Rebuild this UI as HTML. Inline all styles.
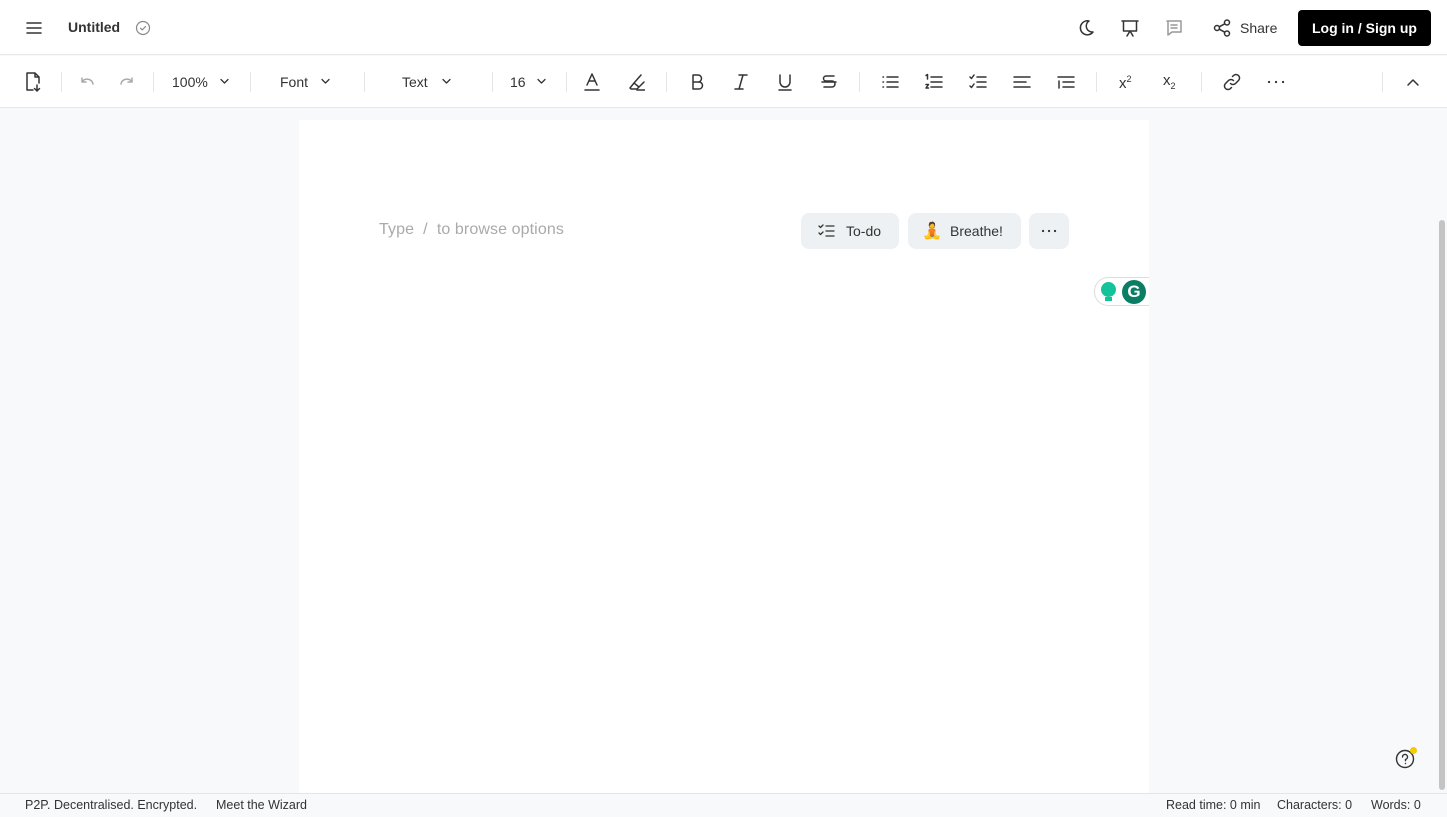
<!DOCTYPE html>
<html><head><meta charset="utf-8"><style>
*{box-sizing:border-box;margin:0;padding:0}
body{width:1447px;height:817px;overflow:hidden;background:#f8f9fb;font-family:"Liberation Sans",Arial,sans-serif;color:#222;position:relative}
.a{position:absolute}
svg{position:absolute;fill:none;stroke:#333;stroke-width:1.5;stroke-linecap:round;stroke-linejoin:round}
.sep{position:absolute;top:72px;width:1px;height:20px;background:#e3e5e8}
.t{position:absolute;font-size:14px;color:#333;top:74px}
.btn{position:absolute;top:213px;height:36px;background:#eef1f3;border-radius:8px;font-size:14px;color:#333;line-height:36px}
.f{position:absolute;top:798px;font-size:12.5px;color:#333}
</style></head><body>
<div class="a" style="left:0;top:0;width:1447px;height:55px;background:#fff;border-bottom:1px solid #e6e8eb"></div>
<div class="a" style="left:0;top:56px;width:1447px;height:52px;background:#fff;border-bottom:1px solid #e6e8eb"></div>
<svg style="left:25px;top:20px" width="18" height="16"><path d="M2 3h14M2 8h14M2 13h14"/></svg>
<div class="a" style="left:68px;top:19px;font-size:14px;font-weight:bold;color:#333">Untitled</div>
<svg style="left:135px;top:20px;stroke:#888;stroke-width:1.2" width="16" height="16"><circle cx="8" cy="8" r="6.5"/><path d="M5.5 8.2l1.8 1.7 3.2-3.4"/></svg>
<svg style="left:1076px;top:18px" width="20" height="20"><path d="M13 3a7 7 0 1 0 4 11 6 6 0 0 1-4-11z"/></svg>
<svg style="left:1120px;top:18px" width="20" height="20"><path d="M2 3h16M3.5 3v10h13V3M7 18l3-5 3 5"/></svg>
<svg style="left:1164px;top:18px;stroke:#999" width="20" height="20"><path d="M3 3h14v11H8l-4 3V3zM7 7h6M7 10h6"/></svg>
<svg style="left:1212px;top:18px" width="20" height="20"><circle cx="5" cy="10" r="2.5"/><circle cx="15" cy="4.5" r="2.5"/><circle cx="15" cy="15.5" r="2.5"/><path d="M7.2 8.8l5.6-3M7.2 11.2l5.6 3"/></svg>
<div class="a" style="left:1240px;top:20px;font-size:14px;color:#333">Share</div>
<div class="a" style="left:1298px;top:10px;width:133px;height:36px;background:#000;border-radius:4px;color:#fff;font-size:14px;font-weight:bold;text-align:center;line-height:36px">Log in / Sign up</div>
<svg style="left:23px;top:71px" width="20" height="22"><path d="M12 2H4v17h6M12 2l4 4v6M12 2v4h4M14 14v6M11.5 17.5l2.5 2.5 2.5-2.5"/></svg>
<div class="sep" style="left:61px"></div>
<svg style="left:78px;top:74px;stroke:#aaa" width="18" height="16"><path d="M4 4v4h4M4 8a6 6 0 0 1 11 2"/></svg>
<svg style="left:118px;top:74px;stroke:#aaa" width="18" height="16"><path d="M14 4v4h-4M14 8a6 6 0 0 0-11 2"/></svg>
<div class="sep" style="left:153px"></div>
<div class="t" style="left:172px">100%</div>
<svg style="left:220px;top:78px;stroke-width:1.3" width="9" height="7"><path d="M1 1.5l3.5 3.5 3.5-3.5"/></svg>
<div class="sep" style="left:250px"></div>
<div class="t" style="left:280px">Font</div>
<svg style="left:321px;top:78px;stroke-width:1.3" width="9" height="7"><path d="M1 1.5l3.5 3.5 3.5-3.5"/></svg>
<div class="sep" style="left:364px"></div>
<div class="t" style="left:402px">Text</div>
<svg style="left:442px;top:78px;stroke-width:1.3" width="9" height="7"><path d="M1 1.5l3.5 3.5 3.5-3.5"/></svg>
<div class="sep" style="left:492px"></div>
<div class="t" style="left:510px">16</div>
<svg style="left:537px;top:78px;stroke-width:1.3" width="9" height="7"><path d="M1 1.5l3.5 3.5 3.5-3.5"/></svg>
<div class="sep" style="left:566px"></div>
<svg style="left:583px;top:72px" width="18" height="20"><path d="M4 13L9 2l5 11M6 9h6M2 18h14"/></svg>
<svg style="left:627px;top:72px" width="18" height="20"><path d="M3 16l4-5 5 4-2 2H4zM7 11l7-8M12 15l5-5M10 18h8"/></svg>
<div class="sep" style="left:666px"></div>
<svg style="left:688px;top:72px" width="18" height="20"><path d="M5 3h5a3.5 3.5 0 0 1 0 7H5zM5 10h6a3.5 3.5 0 0 1 0 7H5z"/></svg>
<svg style="left:732px;top:72px" width="18" height="20"><path d="M7 3h8M3 17h8M11 3L7 17"/></svg>
<svg style="left:776px;top:72px" width="18" height="20"><path d="M4 3v7a5 5 0 0 0 10 0V3M3 18h12"/></svg>
<svg style="left:820px;top:72px" width="18" height="20"><path d="M14 4H6a2.5 2.5 0 0 0 0 5h6a3 3 0 0 1 0 6H4M2 10h14"/></svg>
<div class="sep" style="left:859px"></div>
<svg style="left:880px;top:72px" width="20" height="20"><path d="M3 5h.5M3 10h.5M3 15h.5M7 5h11M7 10h11M7 15h11"/></svg>
<svg style="left:924px;top:72px" width="20" height="20"><path d="M2 3.5l1.5-1V7M2 12.5h2.5L2 16h2.5M7 5h11M7 10h11M7 15h11"/></svg>
<svg style="left:968px;top:72px" width="20" height="20"><path d="M2 5l1.5 1.5L6 3M2 14l1.5 1.5L6 12M9 5h9M9 10h9M9 15h9"/></svg>
<svg style="left:1012px;top:72px" width="20" height="20"><path d="M2 5h16M2 10h12M2 15h16"/></svg>
<svg style="left:1056px;top:72px" width="20" height="20"><path d="M2 5h16M7 10h11M7 15h11M3 9v7"/></svg>
<div class="sep" style="left:1096px"></div>
<div class="a" style="left:1119px;top:74px;font-size:15px;color:#333">x<sup style="font-size:9px">2</sup></div>
<div class="a" style="left:1163px;top:72px;font-size:15px;color:#333">x<sub style="font-size:9px">2</sub></div>
<div class="sep" style="left:1201px"></div>
<svg style="left:1222px;top:72px" width="20" height="20"><path d="M8.5 11.5a3.5 3.5 0 0 0 5 0l3-3a3.5 3.5 0 0 0-5-5l-1 1M11.5 8.5a3.5 3.5 0 0 0-5 0l-3 3a3.5 3.5 0 0 0 5 5l1-1"/></svg>
<svg style="left:1266px;top:72px;stroke-width:2.2" width="20" height="20"><path d="M3 10h.1M10 10h.1M17 10h.1"/></svg>
<div class="sep" style="left:1382px"></div>
<svg style="left:1405px;top:76px" width="16" height="12"><path d="M3 9l5-5 5 5"/></svg>
<div class="a" style="left:299px;top:120px;width:850px;height:673px;background:#fff"></div>
<div class="a" style="left:379px;top:221px;font-size:16px;color:#aaa;letter-spacing:0.1px">Type &nbsp;/ &nbsp;to browse options</div>
<div class="btn" style="left:801px;width:98px;padding-left:45px">To-do</div>
<svg style="left:818px;top:223px;stroke-width:1.3" width="18" height="16"><path d="M1 3l1.5 1.5L5 2M1 10l1.5 1.5L5 9M8 3h8M8 8h8M8 13h8"/></svg>
<div class="btn" style="left:908px;width:113px;padding-left:42px">Breathe!</div>
<div class="a" style="left:922px;top:221px;font-size:16px;font-family:'Noto Color Emoji','DejaVu Sans',sans-serif">🧘</div>
<div class="btn" style="left:1029px;width:40px"></div>
<svg style="left:1039px;top:221px;stroke-width:2.2" width="20" height="20"><path d="M4 10h.1M10 10h.1M16 10h.1"/></svg>
<div class="a" style="left:1094px;top:277px;width:55px;height:29px;border:1px solid #ddd;border-right:none;border-radius:14px 0 0 14px;background:#fff"></div>
<div class="a" style="left:1101px;top:282px;width:15px;height:15px;border-radius:50%;background:#15c39a"></div>
<div class="a" style="left:1105px;top:297px;width:7px;height:4px;background:#15c39a"></div>
<div class="a" style="left:1122px;top:280px;width:24px;height:24px;border-radius:50%;background:#0b7d64;color:#fff;font-weight:bold;font-size:17px;text-align:center;line-height:24px">G</div>
<svg style="left:1395px;top:749px;stroke-width:1.4" width="20" height="20"><circle cx="10" cy="10" r="8.5"/><path d="M7.5 8a2.5 2.5 0 1 1 3 2.4v1.3M10.5 14.5v.1"/></svg>
<div class="a" style="left:1410px;top:747px;width:7px;height:7px;border-radius:50%;background:#f5cc00"></div>
<div class="a" style="left:1439px;top:220px;width:6px;height:570px;background:#c4c4c4;border-radius:3px"></div>
<div class="a" style="left:0;top:793px;width:1447px;height:24px;background:#f8f9fb;border-top:1px solid #e3e5e8"></div>
<div class="f" style="left:25px">P2P. Decentralised. Encrypted.</div>
<div class="f" style="left:216px">Meet the Wizard</div>
<div class="f" style="left:1166px">Read time: 0 min</div>
<div class="f" style="left:1277px">Characters: 0</div>
<div class="f" style="left:1371px">Words: 0</div>
</body></html>
